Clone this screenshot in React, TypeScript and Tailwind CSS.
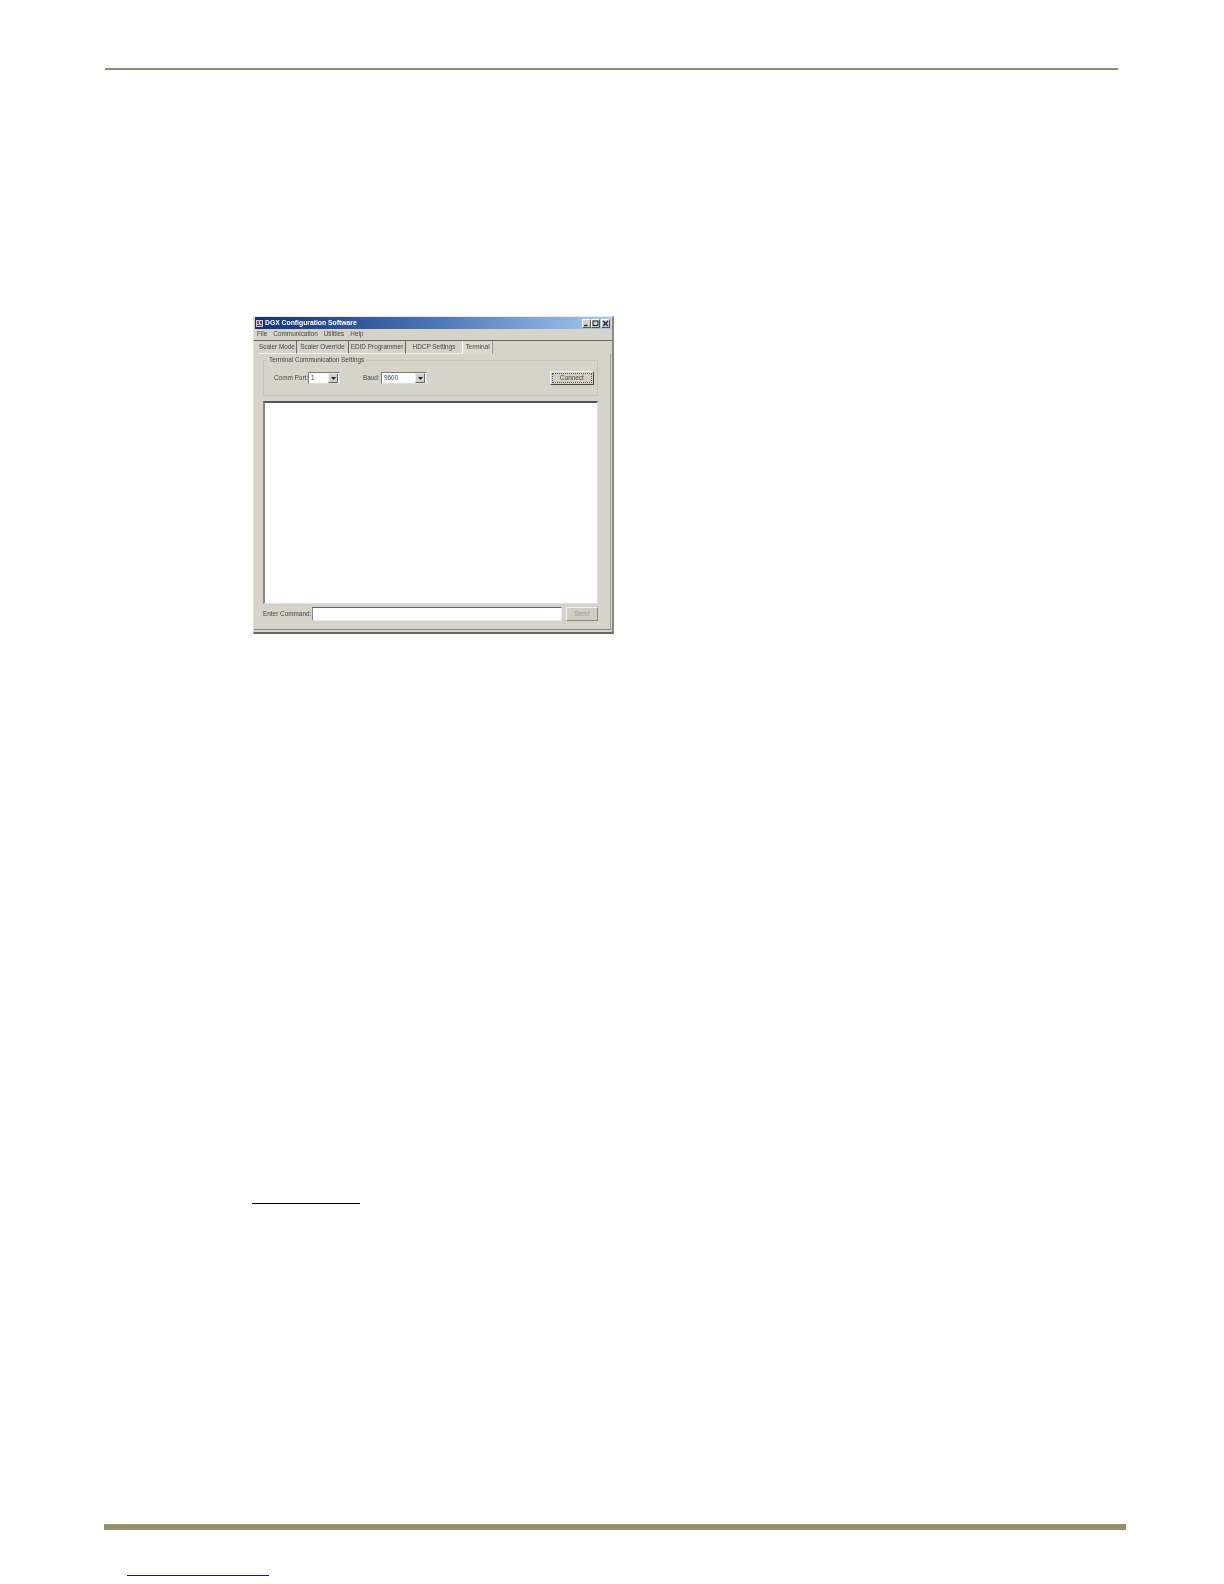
import React from "react";

const Arrow = () => (
  <div className="w-[10px] h-[10px] bg-[#d4d0c8] border border-t-[#eeeeee] border-l-[#eeeeee] border-r-[#666666] border-b-[#666666] flex items-center justify-center">
    <svg width="5" height="3" viewBox="0 0 5 3"><path d="M0 0H5L2.5 3Z" fill="#222" /></svg>
  </div>
);

const Combo = ({ value, w }: { value: string; w: string }) => (
  <div className={`${w} h-[12px] bg-white border-t border-l border-t-[#777] border-l-[#777] border-r border-b border-r-[#ddd] border-b-[#ddd] flex items-center justify-between pl-[2px] pr-px`}>
    <span>{value}</span>
    <Arrow />
  </div>
);

const Tab = ({ label, w, active, muted }: { label: string; w: string; active?: boolean; muted?: boolean }) => (
  <div className={`${w} h-[13px] flex items-center justify-center whitespace-nowrap ${active ? "bg-[#dcd9d1] border-l border-l-white border-r border-r-[#999]" : muted ? "border-b border-b-[#f4f4f0]" : "border-r border-r-[#666] border-b border-b-[#f4f4f0]"}`}>
    {label}
  </div>
);

const Cap = ({ children }: { children: React.ReactNode }) => (
  <div className="w-[9px] h-[9px] bg-[#d4d0c8] border border-t-white border-l-white border-r-[#555] border-b-[#555] flex items-center justify-center">
    <svg width="7" height="7" viewBox="0 0 7 7" fill="none" stroke="#222" strokeWidth="1">{children}</svg>
  </div>
);

export default function App() {
  return (
    <div className="w-[1224px] h-[1584px] bg-white flex flex-col items-start overflow-hidden" style={{ fontFamily: '"Liberation Sans", Arial, sans-serif' }}>
      <div className="mt-[68px] ml-[105px] w-[1013px] h-[2px] bg-[#8f8b72]" />

      <div className="mt-[246px] ml-[253px] w-[361px] h-[318px] flex flex-col bg-[#d6d3cb] border-t border-t-[#e8e8e4] border-l border-l-[#e0e0dc] border-r-2 border-r-[#8a8983] border-b-2 border-b-[#66655f] text-[6.4px] leading-none text-[#444] whitespace-nowrap blur-[0.5px]">
        <div className="h-[12px] mx-px flex items-center justify-between bg-gradient-to-r from-[#12307a] via-[#4a76b4] to-[#a6caf0] pl-px pr-px">
          <div className="flex items-center gap-[2px] text-white font-bold text-[6.8px]">
            <svg width="7" height="7" viewBox="0 0 7 7"><rect width="7" height="7" fill="#c8c8dc" /><rect x="1" y="1" width="2" height="3" fill="#b04040" /><rect x="4" y="1" width="2" height="3" fill="#3050a0" /><rect x="1" y="5" width="5" height="1" fill="#444" /></svg>
            <span>DGX Configuration Software</span>
          </div>
          <div className="flex items-center">
            <Cap><path d="M1 5.5H4.5" strokeWidth="1.4" /></Cap>
            <Cap><rect x="1" y="1" width="5" height="4.5" /></Cap>
            <div className="ml-px"><Cap><path d="M1 1L6 6M6 1L1 6" strokeWidth="1.3" /></Cap></div>
          </div>
        </div>

        <div className="h-[12px] flex items-center gap-[6px] pl-[3px] pb-px border-b border-b-[#66655f]">
          <span>File</span>
          <span>Communication</span>
          <span>Utilities</span>
          <span>Help</span>
        </div>

        <div className="flex pl-[4px]">
          <Tab label="Scaler Mode" w="w-[39px]" />
          <Tab label="Scaler Override" w="w-[52px]" />
          <Tab label="EDID Programmer" w="w-[57px]" />
          <Tab label="HDCP Settings" w="w-[56px]" muted />
          <Tab label="Terminal" w="w-[31px]" active />
        </div>

        <div className="flex-1 flex flex-col mr-px mb-[2px] pl-[9px] pr-[12px] pt-[6px] border-r border-r-[#a09f98] border-b border-b-[#88877f]">
          <div className="h-[36px] shrink-0 border border-[#c4c1b8] relative flex items-center pl-[10px] pr-[3px]">
            <span className="absolute -top-[4px] left-[3px] px-[2px] bg-[#d6d3cb]">Terminal Communication Settings</span>
            <span className="w-[34px]">Comm Port:</span>
            <Combo value="1" w="w-[32px]" />
            <span className="ml-[23px] w-[18px]">Baud:</span>
            <Combo value="9600" w="w-[46px]" />
            <div className="ml-auto w-[44px] h-[14px] bg-[#d4d0c8] border border-t-[#f4f4f4] border-l-[#f4f4f4] border-r-[#444] border-b-[#444] flex items-center justify-center p-px">
              <div className="w-full h-full border border-dotted border-[#555] flex items-center justify-center">Connect</div>
            </div>
          </div>

          <div className="mt-[5px] h-[203px] shrink-0 bg-white border-t-2 border-t-[#555] border-l-2 border-l-[#888] border-r border-r-[#ddd] border-b border-b-[#ddd]" />

          <div className="mt-[3px] flex items-center h-[14px]">
            <span className="w-[49px]">Enter Command:</span>
            <div className="w-[250px] h-full bg-white border-t border-t-[#666] border-l border-l-[#888] border-r border-r-[#e8e8e4] border-b border-b-[#e8e8e4]" />
            <div className="ml-[4px] w-[32px] h-full bg-[#d0cdc5] border border-t-[#f0f0ec] border-l-[#f0f0ec] border-r-[#888] border-b-[#888] flex items-center justify-center text-[#999]">Send</div>
          </div>
        </div>
      </div>

      <div className="mt-[569px] ml-[252px] w-[108px] h-px bg-black" />
      <div className="mt-[320px] ml-[104px] w-[1022px] h-[6px] bg-[#96906f]" />
      <div className="mt-[45px] ml-[127px] w-[142px] h-px bg-[#14148a]" />
    </div>
  );
}
